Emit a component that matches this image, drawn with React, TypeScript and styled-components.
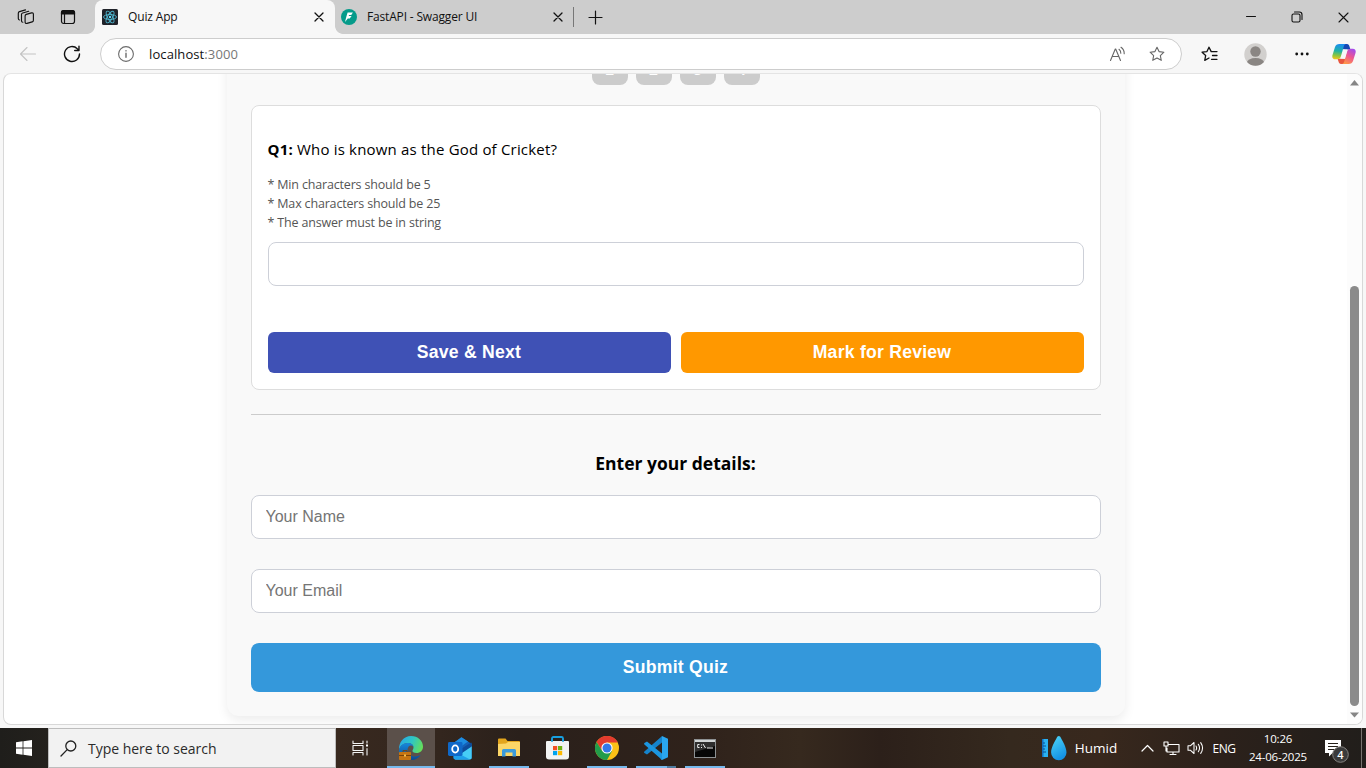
import React from "react";
import styled, { createGlobalStyle, css } from "styled-components";

const ui = `"Segoe UI", "Open Sans", "Noto Sans", sans-serif`;
const arial = `"Liberation Sans", Arial, sans-serif`;

const GlobalStyle = createGlobalStyle`
  *, *::before, *::after { box-sizing: border-box; }
  body { margin: 0; font-family: ${ui}; overflow: hidden; }
  button, input { font-family: ${arial}; }
  svg { display: block; flex: none; }
`;

const Desktop = styled.div`
  width: 1366px;
  height: 768px;
  display: flex;
  flex-direction: column;
  overflow: hidden;
  background: #f7f7f7;
`;

/* Browser frame */

const TabStrip = styled.div`
  height: 34px;
  flex: none;
  display: flex;
  align-items: stretch;
  background: #cdcdcd;
`;

const Slot = styled.div<{ $w: number }>`
  width: ${(p) => p.$w}px;
  flex: none;
  display: flex;
  align-items: center;
  justify-content: center;
`;

const Spacer = styled.div`
  flex: 1;
`;

const Tab = styled.div<{ $active?: boolean }>`
  position: relative;
  width: ${(p) => (p.$active ? 240 : 238)}px;
  flex: none;
  display: flex;
  align-items: center;
  padding: 0 ${(p) => (p.$active ? "11px 0 7px" : "10px 0 6px")};
  font-size: 12px;
  color: #111;
  ${(p) =>
    p.$active &&
    css`
      background: #f7f7f7;
      border-radius: 8px 8px 0 0;
      &::before,
      &::after {
        content: "";
        position: absolute;
        bottom: 0;
        width: 8px;
        height: 8px;
      }
      &::before {
        left: -8px;
        background: radial-gradient(circle at 0 0, transparent 7.5px, #f7f7f7 8.2px);
      }
      &::after {
        right: -8px;
        background: radial-gradient(circle at 100% 0, transparent 7.5px, #f7f7f7 8.2px);
      }
    `}
`;

const TabTitle = styled.span<{ $ls: number }>`
  flex: 1;
  margin: 0 0 1px 10px;
  white-space: nowrap;
  letter-spacing: ${(p) => p.$ls}px;
`;

const TabDivider = styled.div`
  width: 1px;
  height: 20px;
  margin: 7px 0;
  background: #777;
`;

const Toolbar = styled.div`
  height: 39px;
  flex: none;
  display: flex;
  align-items: center;
  padding: 1px 0 0 6px;
`;

const AddressBar = styled.div`
  width: 1082px;
  height: 32px;
  margin-left: 6px;
  display: flex;
  align-items: center;
  padding: 0 16px 0 17px;
  border: 1px solid #cdcdcd;
  border-radius: 16px;
  background: #fff;
  font-size: 13px;
  color: #111;
`;

const Url = styled.span`
  flex: 1;
  margin-left: 15px;
  letter-spacing: 0.1px;
  span {
    color: #777;
  }
`;

const IconGap = styled.div<{ $w: number }>`
  width: ${(p) => p.$w}px;
`;

/* Page area */

const Viewport = styled.div`
  height: 652px;
  margin: 0 3px;
  flex: none;
  display: flex;
  border: 1px solid #d8d8d8;
  border-top-color: #e4e4e4;
  border-radius: 8px;
  background: #fff;
  overflow: hidden;
`;

const Page = styled.div`
  flex: 1;
  display: flex;
  justify-content: center;
  align-items: flex-end;
  padding-bottom: 8px;
`;

const Scrollbar = styled.div`
  width: 15px;
  display: flex;
  flex-direction: column;
  align-items: center;
  justify-content: space-between;
  padding: 6px 0 6px;
  background: #fcfcfc;
`;

const Thumb = styled.div`
  width: 9px;
  height: 420px;
  flex: none;
  margin: auto 0 6px;
  border-radius: 5px;
  background: #8b8b8b;
`;

const QuizCard = styled.main`
  width: 898px;
  padding: 24px;
  display: flex;
  flex-direction: column;
  border-radius: 12px;
  background: #f9f9f9;
  box-shadow: 0 4px 12px rgba(0, 0, 0, 0.08);
`;

const QuestionNav = styled.nav`
  display: flex;
  justify-content: center;
  gap: 8px;
  margin-bottom: 20px;
`;

const NavButton = styled.button`
  width: 36px;
  height: 36px;
  padding: 5px 0 0;
  border: 0;
  border-radius: 8px;
  background: #ccc;
  color: #fff;
  font-size: 16px;
  font-weight: bold;
`;

const QuestionBox = styled.section`
  height: 285px;
  display: flex;
  flex-direction: column;
  padding: 31px 16px 16px;
  border: 1px solid #ddd;
  border-radius: 8px;
  background: #fff;
`;

const Question = styled.p`
  margin: 0;
  font-size: 15px;
  line-height: 24px;
  letter-spacing: 0.19px;
  color: #000;
`;

const Rules = styled.div`
  margin-top: 14px;
  font-size: 12.5px;
  line-height: 19px;
  letter-spacing: -0.17px;
  color: #555;
`;

const Rule = styled.div``;

const Field = styled.input`
  height: 44px;
  flex: none;
  padding: 0 14px;
  border: 1px solid #cdd0d8;
  border-radius: 8px;
  background: #fff;
  font-size: 16px;
  outline: none;
  &::placeholder {
    color: #757575;
    opacity: 1;
  }
`;

const AnswerField = styled(Field)`
  margin-top: 10px;
`;

const Actions = styled.div`
  display: flex;
  gap: 10px;
  margin-top: auto;
`;

const ActionButton = styled.button<{ $bg: string }>`
  flex: 1;
  height: 41px;
  padding: 0;
  border: 0;
  border-radius: 6px;
  background: ${(p) => p.$bg};
  color: #fff;
  font-size: 17.6px;
  font-weight: bold;
  letter-spacing: 0.24px;
`;

const Divider = styled.hr`
  width: 100%;
  height: 1px;
  margin: 24px 0 0;
  border: 0;
  background: #ccc;
`;

const DetailsHeading = styled.h3`
  margin: 36px 0 19px;
  text-align: center;
  font-size: 17.5px;
  line-height: 25px;
  font-weight: 700;
  color: #000;
`;

const DetailField = styled(Field)`
  margin-bottom: 30px;
`;

const SubmitButton = styled(ActionButton)`
  flex: none;
  height: 49px;
  border-radius: 8px;
`;

/* Taskbar */

const Taskbar = styled.footer`
  height: 40px;
  margin-top: auto;
  flex: none;
  display: flex;
  color: #fff;
  background: linear-gradient(90deg, #1f1e1b 0, #24211d 50px, #38291f 336px, #33261e 440px, #2a201b 520px, #2f221b 700px, #36291e 800px, #2c201a 880px, #35291e 1010px, #38281d 1100px, #2c211b 1220px, #211e1b 1366px);
`;

const SearchBox = styled.div`
  width: 288px;
  flex: none;
  display: flex;
  align-items: center;
  gap: 11px;
  padding-left: 11px;
  border: 1px solid #bdbdbd;
  background: #f2f2f2;
  color: #2b2b2b;
`;

const TaskButton = styled.div<{ $w?: number; $line?: number; $active?: boolean }>`
  width: ${(p) => p.$w ?? 49}px;
  flex: none;
  display: flex;
  align-items: center;
  justify-content: center;
  background: ${(p) => (p.$active ? "#5b504a" : "transparent")} no-repeat;
  ${(p) =>
    p.$line &&
    css`
      background-image: linear-gradient(#76b9ed, #76b9ed);
      background-size: ${p.$line}px 2px;
      background-position: center bottom;
    `}
`;

const TaskGroupButton = styled(TaskButton)`
  background-image: linear-gradient(90deg, #76b9ed 31px, #4f7ca0 31px);
`;

const TrayText = styled.span<{ $size: number; $ls?: number }>`
  font-size: ${(p) => p.$size}px;
  letter-spacing: ${(p) => p.$ls ?? 0}px;
  white-space: nowrap;
`;

const Clock = styled.div`
  width: 74px;
  display: flex;
  flex-direction: column;
  align-items: center;
  padding-top: 2px;
  font-size: 11.5px;
  line-height: 18px;
  letter-spacing: -0.2px;
`;

const ShowDesktop = styled.div`
  width: 5px;
  border-left: 1px solid #77736f;
`;

type StrokeProps = { w: number; h: number; color?: string; sw?: number; children: React.ReactNode };
const Stroke = ({ w, h, color = "#111", sw = 1.1, children }: StrokeProps) => (
  <svg width={w} height={h} viewBox={`0 0 ${w} ${h}`} fill="none" stroke={color} strokeWidth={sw} strokeLinecap="round" strokeLinejoin="round">
    {children}
  </svg>
);

const Close = ({ s = 8, sw = 1.3 }: { s?: number; sw?: number }) => (
  <Stroke w={s + 2} h={s + 2} sw={sw}>
    <path d={`M1 1L${s + 1} ${s + 1}M${s + 1} 1L1 ${s + 1}`} />
  </Stroke>
);

const Workspaces = () => (
  <Stroke w={18} h={18} sw={1.15}>
    <path d="M9.300 6.400l5.200-1.500c1.100-.3 1.900.3 1.900 1.400v6c0 .8-.5 1.400-1.200 1.600l-5.200 1.500c-1.100.3-1.900-.3-1.900-1.400V8c0-.8.5-1.400 1.200-1.600z" />
    <path d="M5.800 14.200c-.9 0-1.300-.7-1.300-1.500V6.600c0-.8.5-1.400 1.200-1.600l6-1.700M2.400 12c-.7-.2-1.100-.7-1.100-1.400V5.200c0-.8.5-1.400 1.200-1.600l6-1.700" />
  </Stroke>
);

const StarPath = "M8 1.200l2.050 4.400 4.850.6-3.550 3.350.9 4.800L8 12l-4.250 2.350.9-4.800L1.100 6.200l4.850-.6z";

const ReactIcon = () => (
  <svg width="16" height="16" viewBox="0 0 16 16">
    <rect width="16" height="16" rx="1.500" fill="#20232a" />
    <g fill="none" stroke="#4fb7cf" strokeWidth=".9">
      <ellipse cx="8" cy="8" rx="6.500" ry="2.500" />
      <ellipse cx="8" cy="8" rx="6.500" ry="2.500" transform="rotate(60 8 8)" />
      <ellipse cx="8" cy="8" rx="6.500" ry="2.500" transform="rotate(120 8 8)" />
    </g>
    <circle cx="8" cy="8" r="1.200" fill="#61dafb" />
  </svg>
);

const FastApiIcon = () => (
  <svg width="16" height="16" viewBox="0 0 16 16">
    <circle cx="8" cy="8" r="8" fill="#059b8a" />
    <path d="M6.600 3.600h5.300L10.300 6H8.200L7.600 7.100h3L8.700 9.500H6.800L4 12.900l1.200-4.600z" fill="#fff" />
  </svg>
);

const Copilot = () => (
  <svg width="24" height="22" viewBox="0 0 24 22">
    <defs>
      <linearGradient id="cpA" x1=".4" y1="0" x2=".3" y2="1">
        <stop offset="0" stopColor="#1b8df0" />
        <stop offset=".45" stopColor="#1fb2a5" />
        <stop offset=".75" stopColor="#8bc53f" />
        <stop offset="1" stopColor="#f5c51c" />
      </linearGradient>
      <linearGradient id="cpB" x1=".8" y1="0" x2=".3" y2="1">
        <stop offset="0" stopColor="#a04bf0" />
        <stop offset=".5" stopColor="#ee5590" />
        <stop offset="1" stopColor="#ff9748" />
      </linearGradient>
    </defs>
    <path d="M10 1h5c1.500 0 2.100 1 2.500 2.500l.9 2.900h-5L10 6z" fill="#1647b5" />
    <path d="M14 21H9c-1.500 0-2.100-1-2.500-2.500l-.9-2.700h5L14 16z" fill="#e8563f" />
    <path d="M7.500 1h6.200c-1.100.4-1.600 1.400-2 2.700L9 13c-.7 2.200-1.500 3.300-3.700 3.300H3.200C.8 16.300-.2 14.500.5 12L3 4C3.700 2 5 1 7.500 1z" fill="url(#cpA)" />
    <path d="M16.500 21h-6.200c1.100-.4 1.600-1.400 2-2.700L15 9c.7-2.200 1.500-3.300 3.700-3.300h2.100c2.400 0 3.400 1.800 2.700 4.300L21 18c-.7 2-2 3-4.500 3z" fill="url(#cpB)" />
    <path d="M11.600 6.500h3.800L12.800 15.500H9z" fill="#f7f7f7" />
  </svg>
);

const Avatar = () => (
  <svg width="23" height="23" viewBox="0 0 23 23">
    <defs>
      <clipPath id="av"><circle cx="11.500" cy="11.500" r="11.200" /></clipPath>
    </defs>
    <g clipPath="url(#av)">
      <rect width="23" height="23" fill="#d2d0ce" />
      <circle cx="11.500" cy="8.500" r="5.200" fill="#8a8683" />
      <ellipse cx="11.500" cy="20" rx="8.700" ry="5" fill="#8a8683" />
    </g>
  </svg>
);

const EdgeIcon = () => (
  <svg width="26" height="26" viewBox="0 0 26 26">
    <defs>
      <linearGradient id="edA" x1="0" y1=".3" x2="1" y2=".6">
        <stop offset="0" stopColor="#27a9e8" />
        <stop offset=".5" stopColor="#2fc6c4" />
        <stop offset="1" stopColor="#66df58" />
      </linearGradient>
      <linearGradient id="edB" x1="0" y1="0" x2="0" y2="1">
        <stop offset="0" stopColor="#1688dc" />
        <stop offset="1" stopColor="#0b4a94" />
      </linearGradient>
    </defs>
    <path d="M1 15C.6 7.500 5.500 1 13 1c7 0 12 5 12 10.500 0 4-2.700 6.500-6.500 6.500-3 0-4.300-1.200-4-2.500.2-.8 1-1.200 1-3C15.500 9.500 13 8 10 8 5.500 8 1.800 11 1 15z" fill="url(#edA)" />
    <path d="M1 16.500C1 11 5 8 9.800 8c3.500 0 5.700 1.900 5.700 4.500 0-1-1-2-2.500-2-2 0-3.500 2-3.500 4.500 0 4 3.500 6.500 7.500 6.500 3 0 5-1.200 6-2-2 3.500-5.500 5.500-9.500 5.500C6 25 1 21.500 1 16.500z" fill="url(#edB)" />
    <rect x="1" y="17" width="12" height="8" rx=".8" fill="#c57411" />
    <path d="M1 20.500h12M5 17v-1.300h4V17" stroke="#7a4206" fill="none" />
    <rect x="6" y="19.500" width="2" height="2" fill="#f6c04d" />
  </svg>
);

const OutlookIcon = () => (
  <svg width="24" height="23" viewBox="0 0 24 23">
    <path d="M13.500.3L23.700 7v13.500c0 1.300-.7 2-2 2H7.500c-1.300 0-2-.7-2-2V6z" fill="#1560b8" />
    <path d="M13.500.3L20 4.600 13 9.500 5.500 6z" fill="#1d8ce0" />
    <path d="M23.700 9v11.500c0 1.300-.7 2-2 2H7L13.500 15z" fill="#46cdf6" />
    <path d="M13 12l10-6.500.7.5v3.500L14 16z" fill="#0d4c9b" />
    <path d="M5.500 19l8-1 8.500 4.500H7.500c-1.300 0-2-.7-2-2z" fill="#1fa0ea" />
    <rect y="5" width="14.500" height="14" rx="1.400" fill="#0f68c8" />
    <ellipse cx="7.200" cy="12" rx="3" ry="3.600" fill="none" stroke="#fff" strokeWidth="1.800" />
  </svg>
);

const ExplorerIcon = () => (
  <svg width="22" height="20" viewBox="0 0 22 20">
    <path d="M0 1.500Q0 .5 1 .5h6.500l2 2.500H21q1 0 1 1V8H0z" fill="#e3a51d" />
    <path d="M0 6l8-.5L10 4h12v14H0z" fill="#fcd667" />
    <path d="M4 18.500v-6q0-1.500 1.500-1.500h11q1.500 0 1.500 1.500v6h-3.500v-4h-7v4z" fill="#3b9bdc" />
  </svg>
);

const StoreIcon = () => (
  <svg width="23" height="24" viewBox="0 0 23 24">
    <path d="M6 6V2.500Q6 1 7.500 1h8Q17 1 17 2.500V6" fill="none" stroke="#18a0e0" strokeWidth="1.800" />
    <path d="M0 6q0-1 1-1h21q1 0 1 1v14.500q0 3-3 3H3q-3 0-3-3z" fill="#f3f3f3" />
    <path d="M6 2.500V6M17 2.500V6" stroke="#18a0e0" strokeWidth="1.400" />
    <path d="M7 10h4.200v4.200H7z" fill="#f25022" />
    <path d="M12 10h4.200v4.200H12z" fill="#6fb312" />
    <path d="M7 15h4.200v4.200H7z" fill="#00a4ef" />
    <path d="M12 15h4.200v4.200H12z" fill="#ffb900" />
  </svg>
);

const ChromeIcon = () => (
  <svg width="24" height="24" viewBox="0 0 24 24">
    <circle cx="12" cy="12" r="12" fill="#fbc116" />
    <path d="M12 6.500h10.700A12 12 0 0 0 1.600 6l5.500 9z" fill="#e33b2e" />
    <path d="M1.600 6A12 12 0 0 0 12 24l5-9-9.800 0z" fill="#229c4a" />
    <circle cx="12" cy="12" r="5.600" fill="#fff" />
    <circle cx="12" cy="12" r="4.500" fill="#3478e8" />
  </svg>
);

const CodeIcon = () => (
  <svg width="24" height="24" viewBox="0 0 24 24">
    <path d="M18 0l6 2.700v18.600L18 24l-1.300-1L18 18z" fill="#2aa6ee" />
    <path d="M17 1l1-1v6.500L3 18.500.4 17q-.7-.8 0-1.500z" fill="#1583cb" />
    <path d="M17 23l1 1v-6.500L3 5.500.4 7q-.7.8 0 1.500z" fill="#1c96df" />
  </svg>
);

const TerminalIcon = () => (
  <svg width="22" height="19" viewBox="0 0 22 19">
    <rect width="22" height="19" fill="#8d9193" />
    <rect x="1" y="1" width="20" height="2" fill="#d0d4d5" />
    <rect x="1" y="3" width="20" height="15" fill="#070707" />
    <path d="M1 3h20v4L1 13z" fill="#2e2e2e" />
    <path d="M5.500 5.500H3.700v3h1.800M7.500 5.500v1M7.500 8v1M9 5l2.500 4M13 9h6" stroke="#eee" fill="none" />
  </svg>
);

const Weather = () => (
  <svg width="25" height="25" viewBox="0 0 25 25">
    <defs>
      <linearGradient id="drop" x1="0" y1="0" x2=".4" y2="1">
        <stop offset="0" stopColor="#4fd8fa" />
        <stop offset="1" stopColor="#1593e4" />
      </linearGradient>
    </defs>
    <rect y="3" width="6" height="18" fill="#29b1f2" />
    <rect y="3" width="1.500" height="18" fill="#146fc0" />
    <path d="M1 7h2M1 10h3M1 13h2M1 16h3" stroke="#0b4f94" />
    <path d="M16.800 0c1 0 1.600.9 2.300 2.300C21 6 24.500 11.500 24.500 16.500a7.700 7.700 0 0 1-15.400 0C9.100 11.500 12.600 6 14.500 2.300 15.200.9 15.800 0 16.800 0z" fill="url(#drop)" />
  </svg>
);

const Notification = () => (
  <svg width="26" height="34" viewBox="0 -6 26 34">
    <path d="M1 3h16v13H8.500L5 19.500V16H1z" fill="#fff" />
    <path d="M4 6.500h10M4 9.500h10M4 12.500h7" stroke="#262019" strokeWidth="1.200" />
    <circle cx="16.500" cy="17.500" r="7.800" fill="#3b3b3b" stroke="#85827f" />
    <text x="16.500" y="21.500" fontFamily='"Open Sans", sans-serif' fontSize="11" fontWeight="600" fill="#fff" textAnchor="middle">4</text>
  </svg>
);

export default function App() {
  return (
    <Desktop>
      <GlobalStyle />
      <TabStrip>
        <Slot $w={52}><Workspaces /></Slot>
        <Slot $w={32}>
          <Stroke w={16} h={16} sw={1.2}>
            <rect x="1.500" y="1.500" width="13" height="13" rx="2.200" />
            <path d="M1.500 3.500Q1.500 1.500 3.700 1.500h8.600Q14.500 1.500 14.500 3.500V5h-13z" fill="#111" />
            <path d="M4.500 5v9" />
          </Stroke>
        </Slot>
        <Slot $w={11} />
        <Tab $active>
          <ReactIcon />
          <TabTitle $ls={-0.15}>Quiz App</TabTitle>
          <Close />
        </Tab>
        <Tab>
          <FastApiIcon />
          <TabTitle $ls={-0.17}>FastAPI - Swagger UI</TabTitle>
          <Close />
        </Tab>
        <TabDivider />
        <Slot $w={43}>
          <Stroke w={15} h={15} sw={1.2}><path d="M7.500 1v13M1 7.500h13" /></Stroke>
        </Slot>
        <Spacer />
        <Slot $w={46}><Stroke w={12} h={12} sw={1}><path d="M1.500 5.500h9" /></Stroke></Slot>
        <Slot $w={46}>
          <Stroke w={12} h={12}>
            <rect x="1" y="3" width="8" height="8" rx="1.500" />
            <path d="M3.500 1h4.800Q11 1 11 3.700v4.800" />
          </Stroke>
        </Slot>
        <Slot $w={46}><Close s={9} sw={1.1} /></Slot>
      </TabStrip>

      <Toolbar>
        <Slot $w={44}>
          <Stroke w={18} h={16} color="#c3c3c3"><path d="M16.500 8H1.500M8 1.500L1.500 8l6.500 6.500" /></Stroke>
        </Slot>
        <Slot $w={44}>
          <Stroke w={18} h={18} sw={1.4}>
            <path d="M16.500 9a7.500 7.500 0 1 1-2.200-5.300l1.700 1.600M16 1.300v4.200h-4.300" />
          </Stroke>
        </Slot>
        <AddressBar>
          <Stroke w={16} h={16} color="#6b6b6b">
            <circle cx="8" cy="8" r="7.400" />
            <path d="M8 7.300v4M8 4.600v.3" strokeWidth="1.400" />
          </Stroke>
          <Url>localhost<span>:3000</span></Url>
          <Stroke w={17} h={16} color="#666">
            <path d="M1.500 14.500L6.300 3h.4l4.800 11.500M3.200 10.500h6.600M10 3.300c1.300.9 1.900 2.200 1.800 4M12 1.300c2.300 1.500 3.300 3.700 3.200 6.500" />
          </Stroke>
          <IconGap $w={23} />
          <Stroke w={16} h={16} color="#666"><path d={StarPath} /></Stroke>
        </AddressBar>
        <Slot $w={55}>
          <Stroke w={17} h={16} sw={1.3}>
            <path d="M10.200 5.600L8 1.200 5.950 5.600l-4.850.6 3.550 3.350-.9 4.800L8 12M10.500 5.600H16M11.500 9.500H16M10.500 13.300H16" />
          </Stroke>
        </Slot>
        <Slot $w={37}><Avatar /></Slot>
        <Slot $w={56}>
          <svg width="14" height="4" viewBox="0 0 14 4" fill="#111">
            <circle cx="1.700" cy="2" r="1.400" /><circle cx="7" cy="2" r="1.400" /><circle cx="12.300" cy="2" r="1.400" />
          </svg>
        </Slot>
        <Slot $w={28}><Copilot /></Slot>
      </Toolbar>

      <Viewport>
        <Page>
          <QuizCard>
            <QuestionNav>
              {[1, 2, 3, 4].map((n) => <NavButton key={n}>{n}</NavButton>)}
            </QuestionNav>
            <QuestionBox>
              <Question><b>Q1:</b> Who is known as the God of Cricket?</Question>
              <Rules>
                <Rule>* Min characters should be 5</Rule>
                <Rule>* Max characters should be 25</Rule>
                <Rule>* The answer must be in string</Rule>
              </Rules>
              <AnswerField />
              <Actions>
                <ActionButton $bg="#3f51b5">Save &amp; Next</ActionButton>
                <ActionButton $bg="#ff9800">Mark for Review</ActionButton>
              </Actions>
            </QuestionBox>
            <Divider />
            <DetailsHeading>Enter your details:</DetailsHeading>
            <DetailField placeholder="Your Name" />
            <DetailField placeholder="Your Email" />
            <SubmitButton $bg="#3498db">Submit Quiz</SubmitButton>
          </QuizCard>
        </Page>
        <Scrollbar>
          <svg width="9" height="6" viewBox="0 0 9 6" fill="#858585"><path d="M4.500 0L9 5.500H0z" /></svg>
          <Thumb />
          <svg width="9" height="6" viewBox="0 0 9 6" fill="#858585"><path d="M4.500 5.500L9 .5H0z" /></svg>
        </Scrollbar>
      </Viewport>

      <Taskbar>
        <Slot $w={48}>
          <svg width="16" height="16" viewBox="0 0 16 16" fill="#fff">
            <path d="M0 2.200l6.600-.9v6.200H0zM7.400 1.200L16 0v7.500H7.400zM0 8.400h6.600v6.300L0 13.800zM7.400 8.400H16V16l-8.600-1.200z" />
          </svg>
        </Slot>
        <SearchBox>
          <Stroke w={17} h={17} color="#222" sw={1.3}>
            <circle cx="10.800" cy="6" r="5" /><path d="M7.200 9.600L1 16" />
          </Stroke>
          <TrayText $size={14} $ls={-0.02}>Type here to search</TrayText>
        </SearchBox>
        <Slot $w={48}>
          <Stroke w={17} h={16} color="#f4f4f4">
            <path d="M1 1v2.500h10V1M1 15v-2.500h10V15M1 5.500h10v5H1zM15 1v2M15 8.500V15" />
            <path d="M14 4.500h2v2h-2z" fill="#fff" stroke="none" />
          </Stroke>
        </Slot>
        <Slot $w={3} />
        <TaskButton $w={48} $line={48} $active><EdgeIcon /></TaskButton>
        <TaskButton><OutlookIcon /></TaskButton>
        <TaskButton $line={40}><ExplorerIcon /></TaskButton>
        <TaskButton><StoreIcon /></TaskButton>
        <TaskButton $line={40}><ChromeIcon /></TaskButton>
        <TaskGroupButton $line={40}><CodeIcon /></TaskGroupButton>
        <TaskButton $line={40}><TerminalIcon /></TaskButton>
        <Spacer />
        <Slot $w={26}><Weather /></Slot>
        <Slot $w={58}><TrayText $size={13.5}>Humid</TrayText></Slot>
        <Slot $w={10} />
        <Slot $w={24}>
          <Stroke w={13} h={8} color="#fff" sw={1.2}><path d="M1 7l5.500-5.500L12 7" /></Stroke>
        </Slot>
        <Slot $w={24}>
          <Stroke w={17} h={15} color="#fff">
            <path d="M5 3.500h11v7.500H4V7M10 11v2.500M7 13.500h6M1 1h4v4H1zM3 5v5" />
          </Stroke>
        </Slot>
        <Slot $w={24}>
          <Stroke w={17} h={14} color="#fff" sw={1.05}>
            <path d="M1 4.800h2.300L7 1.500v11L3.300 9.200H1zM9 5q1.300 2 0 4M11.300 3.300q2.500 3.700 0 7.400M13.700 1.600q3.700 5.400 0 10.800" />
          </Stroke>
        </Slot>
        <Slot $w={34}><TrayText $size={12} $ls={-0.4}>ENG</TrayText></Slot>
        <Clock><span>10:26</span><span>24-06-2025</span></Clock>
        <Slot $w={44}><Notification /></Slot>
        <Slot $w={2} />
        <ShowDesktop />
      </Taskbar>
    </Desktop>
  );
}
